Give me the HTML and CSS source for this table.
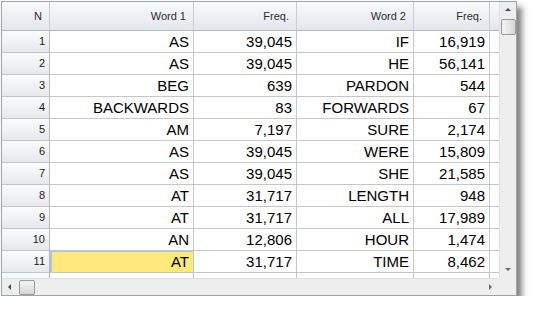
FILE: index.html
```html
<!DOCTYPE html>
<html lang="en">
<head>
    <meta charset="UTF-8">
    <title>Word Pairs</title>
    <link rel="stylesheet" href="styles.css">
</head>
<body>
    <div class="grid-window">
        <div class="grid-body">
            <table class="data-grid">
                <colgroup>
                    <col class="col-n">
                    <col class="col-word1">
                    <col class="col-freq1">
                    <col class="col-word2">
                    <col class="col-freq2">
                    <col class="col-fill">
                </colgroup>
                <thead>
                    <tr>
                        <th>N</th>
                        <th>Word 1</th>
                        <th>Freq.</th>
                        <th>Word 2</th>
                        <th>Freq.</th>
                        <th class="fill"></th>
                    </tr>
                </thead>
                <tbody>
                    <tr><td class="num">1</td><td>AS</td><td>39,045</td><td>IF</td><td>16,919</td><td class="fill"></td></tr>
                    <tr><td class="num">2</td><td>AS</td><td>39,045</td><td>HE</td><td>56,141</td><td class="fill"></td></tr>
                    <tr><td class="num">3</td><td>BEG</td><td>639</td><td>PARDON</td><td>544</td><td class="fill"></td></tr>
                    <tr><td class="num">4</td><td>BACKWARDS</td><td>83</td><td>FORWARDS</td><td>67</td><td class="fill"></td></tr>
                    <tr><td class="num">5</td><td>AM</td><td>7,197</td><td>SURE</td><td>2,174</td><td class="fill"></td></tr>
                    <tr><td class="num">6</td><td>AS</td><td>39,045</td><td>WERE</td><td>15,809</td><td class="fill"></td></tr>
                    <tr><td class="num">7</td><td>AS</td><td>39,045</td><td>SHE</td><td>21,585</td><td class="fill"></td></tr>
                    <tr><td class="num">8</td><td>AT</td><td>31,717</td><td>LENGTH</td><td>948</td><td class="fill"></td></tr>
                    <tr><td class="num">9</td><td>AT</td><td>31,717</td><td>ALL</td><td>17,989</td><td class="fill"></td></tr>
                    <tr><td class="num">10</td><td>AN</td><td>12,806</td><td>HOUR</td><td>1,474</td><td class="fill"></td></tr>
                    <tr><td class="num">11</td><td class="selected">AT</td><td>31,717</td><td>TIME</td><td>8,462</td><td class="fill"></td></tr>
                    <tr><td class="num"></td><td></td><td></td><td></td><td></td><td class="fill"></td></tr>
                </tbody>
            </table>
        </div>

        <div class="vscroll">
            <div class="arrow arrow-up"></div>
            <div class="vthumb"></div>
            <div class="vtrack"></div>
            <div class="arrow arrow-down"></div>
        </div>

        <div class="hscroll">
            <div class="arrow arrow-left"></div>
            <div class="hthumb"></div>
            <div class="htrack"></div>
            <div class="arrow arrow-right"></div>
        </div>

        <div class="corner"></div>
    </div>
</body>
</html>
```

FILE: styles.css
```css
* {
    margin: 0;
    padding: 0;
    box-sizing: border-box;
}

body {
    font-family: 'Liberation Sans', Arial, sans-serif;
    background: #ffffff;
    padding: 1px 0 0 1px;
}

.grid-window {
    width: 516px;
    height: 295px;
    border: 1px solid #9ea3aa;
    background: #ffffff;
    box-shadow: 5px 6px 6px rgba(0, 0, 0, 0.5);
    display: grid;
    grid-template-columns: 497px 17px;
    grid-template-rows: 276px 17px;
}

.grid-body {
    overflow: hidden;
}

.data-grid {
    border-collapse: separate;
    border-spacing: 0;
    table-layout: fixed;
    width: 497px;
}

.col-n { width: 48px; }
.col-word1 { width: 144px; }
.col-freq1 { width: 103px; }
.col-word2 { width: 117px; }
.col-freq2 { width: 76px; }
.col-fill { width: 9px; }

.data-grid th {
    height: 29px;
    font-size: 11px;
    font-weight: normal;
    color: #2a2a2a;
    text-align: right;
    padding: 0 7px 1px 0;
    background: linear-gradient(to bottom, #fafbfc 0%, #eef0f4 50%, #e4e7ec 100%);
    border-right: 1px solid #c9cdd3;
    border-bottom: 1px solid #b4b9c0;
}

.data-grid th.fill {
    border-right: none;
}

.data-grid td {
    height: 22px;
    font-size: 15px;
    color: #000000;
    text-align: right;
    padding: 0 4px 0 0;
    white-space: nowrap;
    border-right: 1px solid #c6c6c6;
    border-bottom: 1px solid #c6c6c6;
}

.data-grid td.num {
    font-size: 11px;
    color: #1a1a1a;
    vertical-align: top;
    padding: 4px 4px 0 0;
    background: linear-gradient(to bottom, #fbfbfc 0%, #eef0f3 60%, #e6e8ec 100%);
    border-right: 1px solid #b4b9c0;
    border-bottom: 1px solid #c0c4ca;
}

.data-grid td.fill {
    border-right: none;
}

.data-grid td.selected {
    background: #ffe97d;
    box-shadow: inset 2px 0 0 #a9c4e4, inset 0 1px 0 #a9c4e4;
}

.vscroll {
    background: #eeeeee;
    border-left: 1px solid #e2e2e2;
    display: flex;
    flex-direction: column;
    align-items: center;
}

.vthumb {
    width: 15px;
    height: 16px;
    border: 1px solid #9a9a9a;
    border-radius: 2px;
    background: linear-gradient(to right, #f4f4f4 0%, #e6e6e6 50%, #d6d6d6 100%);
}

.vtrack {
    flex: 1;
}

.hscroll {
    background: #eeeeee;
    border-top: 1px solid #e2e2e2;
    display: flex;
    align-items: center;
}

.hthumb {
    width: 16px;
    height: 15px;
    border: 1px solid #9a9a9a;
    border-radius: 2px;
    background: linear-gradient(to bottom, #f4f4f4 0%, #e6e6e6 50%, #d6d6d6 100%);
}

.htrack {
    flex: 1;
}

.corner {
    background: #eeeeee;
}

.arrow {
    width: 17px;
    height: 17px;
    flex: none;
    position: relative;
}

.arrow::after {
    content: '';
    position: absolute;
    width: 0;
    height: 0;
}

.arrow-up::after {
    left: 5px;
    top: 6px;
    border-left: 3px solid transparent;
    border-right: 3px solid transparent;
    border-bottom: 3px solid #4a4a4a;
}

.arrow-down::after {
    left: 5px;
    top: 7px;
    border-left: 3px solid transparent;
    border-right: 3px solid transparent;
    border-top: 3px solid #6a6a6a;
}

.arrow-left::after {
    left: 6px;
    top: 5px;
    border-top: 3px solid transparent;
    border-bottom: 3px solid transparent;
    border-right: 3px solid #4a4a4a;
}

.arrow-right::after {
    left: 7px;
    top: 5px;
    border-top: 3px solid transparent;
    border-bottom: 3px solid transparent;
    border-left: 3px solid #6a6a6a;
}
```
